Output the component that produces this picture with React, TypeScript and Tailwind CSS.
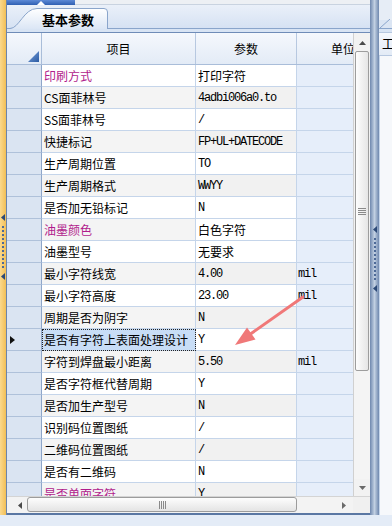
import React from "react";

type Row = {
  name: string;
  value: string;
  unit?: string;
  hl?: boolean;
  cjk?: boolean;
  white?: boolean;
  selected?: boolean;
};

const rows: Row[] = [
  { name: "印刷方式", value: "打印字符", hl: true, cjk: true },
  { name: "CS面菲林号", value: "4adbi006a0.to" },
  { name: "SS面菲林号", value: "/" },
  { name: "快捷标记", value: "FP+UL+DATECODE" },
  { name: "生产周期位置", value: "TO" },
  { name: "生产周期格式", value: "WWYY" },
  { name: "是否加无铅标记", value: "N" },
  { name: "油墨颜色", value: "白色字符", hl: true, cjk: true, white: true },
  { name: "油墨型号", value: "无要求", cjk: true },
  { name: "最小字符线宽", value: "4.00", unit: "mil" },
  { name: "最小字符高度", value: "23.00", unit: "mil" },
  { name: "周期是否为阴字", value: "N" },
  { name: "是否有字符上表面处理设计", value: "Y", selected: true },
  { name: "字符到焊盘最小距离", value: "5.50", unit: "mil" },
  { name: "是否字符框代替周期", value: "Y" },
  { name: "是否加生产型号", value: "N" },
  { name: "识别码位置图纸", value: "/" },
  { name: "二维码位置图纸", value: "/" },
  { name: "是否有二维码", value: "N" },
  { name: "是否单面字符", value: "Y", hl: true },
];

const mono = "font-['Liberation_Mono',monospace] text-[12px] tracking-[-1.2px]";

function Grip() {
  // the little arrows and dotted line on the splitters
  return (
    <div className="flex flex-col items-center">
      <svg width="4" height="7" viewBox="0 0 4 7">
        <path d="M4 0 L0 3.5 L4 7 Z" fill="#2d4a78" />
      </svg>
      <div className="mt-[5px] mb-[5px] h-[42px] border-l-2 border-dotted border-[#4d6a98]" />
      <svg width="4" height="7" viewBox="0 0 4 7">
        <path d="M4 0 L0 3.5 L4 7 Z" fill="#2d4a78" />
      </svg>
    </div>
  );
}

function GridRow({ row, index }: { row: Row; index: number }) {
  const even = index % 2 === 1;
  const valueBg = row.white || !even ? "bg-white" : "bg-[#f1f1f1]";
  return (
    <div className="flex h-[22px] shrink-0">
      <div className="w-[35px] shrink-0 border-r border-b border-r-[#8ea6c9] border-b-[#afc1da] bg-[#dae4f2] flex items-center pl-[3px]">
        {row.selected && (
          <svg width="5" height="8" viewBox="0 0 5 8">
            <path d="M0 0 L5 4 L0 8 Z" fill="#111" />
          </svg>
        )}
      </div>
      <div
        className={`w-[154px] shrink-0 border-r border-b border-[#c5d5ea] flex items-center pl-[2px] whitespace-nowrap overflow-hidden text-[12px] ${
          row.selected ? "bg-[#c8ddf6] outline-1 outline-dotted outline-[#222] -outline-offset-1" : even ? "bg-[#f4f4f4]" : "bg-white"
        } ${row.hl ? "text-[#b11c8c]" : "text-black"}`}
      >
        {row.name}
      </div>
      <div
        className={`w-[101px] shrink-0 border-r border-b border-[#c5d5ea] flex items-center pl-[2px] whitespace-nowrap overflow-hidden text-black ${valueBg} ${
          row.cjk ? "text-[12px]" : mono
        }`}
      >
        {row.value}
      </div>
      <div className={`w-[100px] shrink-0 border-b border-[#c5d5ea] bg-[#e6eefa] flex items-center pl-[1px] text-black ${mono}`}>
        {row.unit}
      </div>
    </div>
  );
}

export default function App() {
  return (
    <div className="relative flex w-[392px] h-[526px] overflow-hidden bg-[#e4ecf7] font-['Noto_Sans_CJK_SC','Liberation_Sans',sans-serif] leading-none select-none">
      {/* left docking strip */}
      <div className="w-[7px] h-[515px] shrink-0 bg-gradient-to-r from-[#fbd98c] to-[#f2bf55] border-r border-[#6d84a8] flex flex-col items-start pl-[1px] pt-[214px]">
        <Grip />
      </div>

      {/* main panel */}
      <div className="w-[363px] shrink-0 flex flex-col">
        <div className="h-[5px] flex">
          <div className="w-[68px] bg-gradient-to-b from-[#5d8ad6] to-[#2f5fb2] flex justify-center items-end">
            <svg width="8" height="4" viewBox="0 0 8 4">
              <path d="M0 4 L4 0 L8 4 Z" fill="#fff" />
            </svg>
          </div>
          <div className="flex-1 bg-[#edf0f4] border-b border-[#c9d3e0]" />
        </div>

        <div className="h-[24px] border-b border-[#8aa5cb] bg-gradient-to-b from-[#eaf0f9] to-[#d6e2f3] flex items-end">
          <div className="relative ml-[3px] -mb-px w-[98px] h-[21px]">
            <svg className="absolute inset-0" width="98" height="21" viewBox="0 0 98 21">
              <defs>
                <linearGradient id="tabg" x1="0" y1="0" x2="0" y2="1">
                  <stop offset="0" stopColor="#ffffff" />
                  <stop offset="1" stopColor="#dbe6f5" />
                </linearGradient>
              </defs>
              <path
                d="M0 20.5 C9 20.5 14 0.5 27 0.5 L94 0.5 Q97.5 0.5 97.5 4 L97.5 21 L0 21 Z"
                fill="url(#tabg)"
              />
              <path
                d="M0 20.5 C9 20.5 14 0.5 27 0.5 L94 0.5 Q97.5 0.5 97.5 4 L97.5 21"
                fill="none"
                stroke="#8aa5cb"
              />
            </svg>
            <div className="relative h-full flex items-center pl-[32px] pt-[1px] text-[13px] font-bold text-black">
              基本参数
            </div>
          </div>
        </div>
        <div className="h-[3px] bg-[#d8e4f4]" />

        {/* grid */}
        <div className="border-t border-[#6f8cb8] flex flex-col">
          <div className="h-[463px] flex">
            <div className="w-[346px] overflow-hidden flex flex-col">
              <div className="h-[32px] shrink-0 flex border-b border-[#a9bdd9] bg-gradient-to-b from-[#f5f8fd] to-[#e3ebf6] text-[12px] text-black">
                <div className="w-[35px] shrink-0 border-r border-[#a9bdd9] flex items-end justify-end pr-[2px] pb-[2px]">
                  <svg width="11" height="11" viewBox="0 0 11 11">
                    <defs>
                      <linearGradient id="cg" x1="0" y1="0" x2="1" y2="1">
                        <stop offset="0" stopColor="#7ba3dc" />
                        <stop offset="1" stopColor="#2b5aa3" />
                      </linearGradient>
                    </defs>
                    <path d="M11 0 L11 11 L0 11 Z" fill="url(#cg)" />
                  </svg>
                </div>
                <div className="w-[154px] shrink-0 border-r border-[#b7c8e0] flex items-center justify-center">项目</div>
                <div className="w-[101px] shrink-0 border-r border-[#b7c8e0] flex items-center justify-center">参数</div>
                <div className="w-[92px] shrink-0 flex items-center justify-center">单位</div>
              </div>
              {rows.map((r, i) => (
                <GridRow key={r.name} row={r} index={i} />
              ))}
            </div>

            {/* vertical scrollbar */}
            <div className="w-[17px] shrink-0 border-l border-[#d0d0d0] bg-[#f2f2f2] flex flex-col items-center">
              <div className="h-[18px] shrink-0 flex items-center justify-center pt-[1px]">
                <svg width="7" height="4" viewBox="0 0 7 4">
                  <path d="M0 4 L3.5 0 L7 4 Z" fill="#4a4a4a" />
                </svg>
              </div>
              <div className="h-[320px] w-[14px] shrink-0 rounded-[2px] border border-[#9d9d9d] bg-gradient-to-r from-[#fdfdfd] to-[#e6e6e6] flex items-center justify-center">
                <div className="flex flex-col gap-[1px]">
                  <div className="w-[8px] h-px bg-[#8a8a8a]" />
                  <div className="w-[8px] h-px bg-[#8a8a8a]" />
                  <div className="w-[8px] h-px bg-[#8a8a8a]" />
                  <div className="w-[8px] h-px bg-[#8a8a8a]" />
                </div>
              </div>
              <div className="flex-1 w-full bg-[#f4f4f4]" />
              <div className="h-[17px] shrink-0 flex items-center justify-center">
                <svg width="7" height="4" viewBox="0 0 7 4">
                  <path d="M0 0 L7 0 L3.5 4 Z" fill="#6a6a6a" />
                </svg>
              </div>
            </div>
          </div>

          {/* horizontal scrollbar */}
          <div className="h-[17px] flex border-t border-[#d4d4d4] bg-[#f3f3f3]">
            <div className="w-[20px] shrink-0 flex items-center justify-end pr-[5px]">
              <svg width="4" height="7" viewBox="0 0 4 7">
                <path d="M4 0 L0 3.5 L4 7 Z" fill="#4a4a4a" />
              </svg>
            </div>
            <div className="w-[270px] h-[15px] shrink-0 rounded-[3px] border border-[#9c9c9c] bg-gradient-to-b from-[#fdfdfd] to-[#e4e4e4] flex items-center justify-center">
              <div className="flex gap-[1px]">
                <div className="w-px h-[8px] bg-[#8a8a8a]" />
                <div className="w-px h-[8px] bg-[#8a8a8a]" />
                <div className="w-px h-[8px] bg-[#8a8a8a]" />
                <div className="w-px h-[8px] bg-[#8a8a8a]" />
              </div>
            </div>
            <div className="w-[56px] shrink-0 flex items-center justify-center pl-[38px]">
              <svg width="4" height="7" viewBox="0 0 4 7">
                <path d="M0 0 L4 3.5 L0 7 Z" fill="#6a6a6a" />
              </svg>
            </div>
            <div className="flex-1 bg-[#f0f0f0]" />
          </div>
          <div className="h-[2px] bg-[#5a77a3]" />
        </div>
        <div className="flex-1 bg-[#e4ecf7]" />
      </div>

      {/* splitter */}
      <div className="w-[9px] h-[515px] shrink-0 bg-gradient-to-r from-[#6f88ae] via-[#c2d0e2] to-[#6f88ae] flex flex-col items-center pt-[226px]">
        <Grip />
      </div>

      {/* right panel (cut off) */}
      <div className="flex-1 flex flex-col h-[515px]">
        <div className="h-[20px] bg-[#e6edf6]" />
        <div className="h-[9px] border-b border-[#8aa5cb] bg-[#dbe5f3] flex items-end">
          <svg width="13" height="9" viewBox="0 0 13 9">
            <path d="M1 9 L11 0" stroke="#8aa5cb" fill="none" />
          </svg>
        </div>
        <div className="h-[3px] bg-[#d8e4f4]" />
        <div className="h-[24px] border-t border-b border-[#b7c8e0] bg-gradient-to-b from-[#f5f8fd] to-[#e3ebf6] flex items-center pl-[3px] text-[12px] whitespace-nowrap">
          工
        </div>
        <div className="flex-1 bg-[#f6f8fb] border-l border-[#c5d5ea]" />
      </div>

      {/* annotation arrow */}
      <svg className="absolute left-0 top-0 pointer-events-none" width="392" height="526" viewBox="0 0 392 526">
        <line x1="303" y1="297" x2="249" y2="335" stroke="#f07878" strokeWidth="3" strokeLinecap="round" />
        <path d="M235 345 L255.5 339.5 L247 327.5 Z" fill="#f07878" />
      </svg>
    </div>
  );
}
